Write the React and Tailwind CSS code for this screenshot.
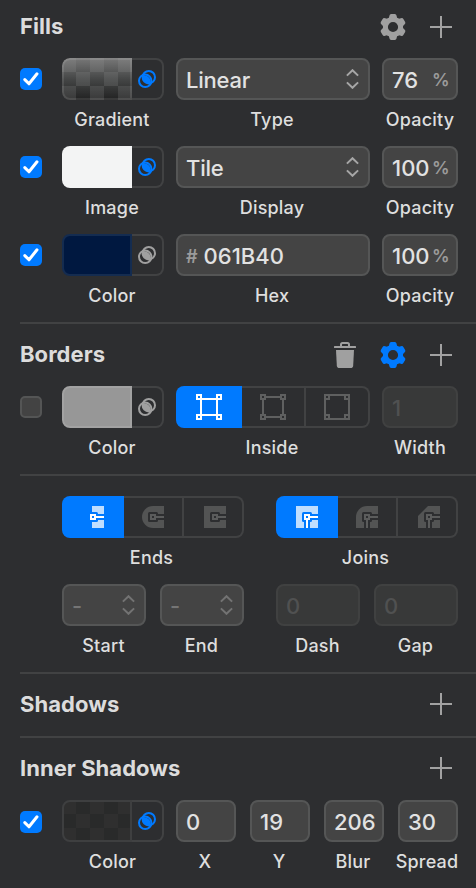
import React from "react";
import clsx from "clsx";

const PlusIcon = () => (
  <svg width="22" height="22" viewBox="0 0 22 22" className="fill-[#a2a2a2]">
    <rect x="0" y="10" width="22" height="2" />
    <rect x="10" y="0" width="2" height="22" />
  </svg>
);

const GearIcon = ({ active }) => (
  <svg width="26" height="26" viewBox="-13 -13 26 26" className={active ? "text-[#007aff]" : "text-[#a0a0a0]"}>
    <circle r="7.6" fill="none" stroke="currentColor" strokeWidth="5" />
    {[0, 60, 120, 180, 240, 300].map((a) => (
      <path
        key={a}
        transform={`rotate(${a})`}
        fill="currentColor"
        d="M-5.6 -8.2C-4 -8.8 -3.9 -9.6 -3.6 -11.2Q-3.3 -13 -1.8 -13H1.8Q3.3 -13 3.6 -11.2C3.9 -9.6 4 -8.8 5.6 -8.2L4 -6H-4Z"
      />
    ))}
  </svg>
);

const TrashIcon = () => (
  <svg width="22" height="26" viewBox="0 0 22 26" className="text-[#a0a0a0]">
    <path d="M7 5V2.5Q7 1 8.5 1H13.5Q15 1 15 2.5V5" fill="none" stroke="currentColor" strokeWidth="2" />
    <rect x="0" y="4" width="22" height="2" rx="0.5" fill="currentColor" />
    <path d="M2 8H20L19.2 23.4Q19 26 16.4 26H5.6Q3 26 2.8 23.4Z" fill="currentColor" />
  </svg>
);

const BlendIcon = ({ active }) => (
  <svg width="18" height="18" viewBox="0 0 18 18" className={active ? "text-[#007aff]" : "text-[#a0a0a0]"}>
    <circle cx="7.2" cy="10.8" r="6.2" fill="none" stroke="currentColor" strokeWidth="2" />
    <circle cx="10.8" cy="7.2" r="6.2" fill="none" stroke="currentColor" strokeWidth="2" />
    <path d="M4.8 5.6A6.2 6.2 0 0 1 12.4 13.2A6.2 6.2 0 0 1 4.8 5.6Z" fill="currentColor" />
  </svg>
);

const Chevrons = ({ dim }) => (
  <svg
    width="13"
    height="20"
    viewBox="0 0 13 20"
    className={clsx("shrink-0 fill-none stroke-2", dim ? "stroke-[#737373]" : "stroke-[#a6a6a6]")}
  >
    <path d="M0.9 6.6L6.5 1.2L12.1 6.6M0.9 13.4L6.5 18.8L12.1 13.4" />
  </svg>
);

/* Selection frame; inset moves the stroke from the handles' outer to inner edge. */
const FrameIcon = ({ inset, active }) => (
  <svg
    width="26"
    height="26"
    viewBox="0 0 26 26"
    className={clsx("fill-none stroke-2", active ? "stroke-white" : "stroke-[#5f6060]")}
  >
    {inset === 5 && <path d="M5 5H21V21H5Z" />}
    {inset === 3 && <path d="M6 3H20M23 6V20M20 23H6M3 20V6" />}
    {inset === 1 && <path d="M1 1H25V25H1Z" />}
    {[[1, 1], [21, 1], [1, 21], [21, 21]].map(([x, y]) => (
      <rect key={`${x}-${y}`} x={x} y={y} width="4" height="4" className={active ? "fill-[#007aff]" : "fill-[#2d2e30]"} />
    ))}
  </svg>
);

const SHAPES = {
  butt: "M10 0H22V22H10Z",
  round: "M11 0H22V22H11A11 11 0 0 1 11 0Z",
  square: "M0 0H22V22H0Z",
  roundJoin: "M11 0H22V22H0V11A11 11 0 0 1 11 0Z",
  bevelJoin: "M10 0H22V22H0V10Z",
};

const StrokeIcon = ({ shape, join, active }) => (
  <svg width="22" height="22" viewBox="0 0 22 22">
    <path d={SHAPES[shape]} className={active ? "fill-[#bfdeff]" : "fill-[#535454]"} />
    <g className={active ? "fill-[#007aff]" : "fill-[#2d2e30]"}>
      <rect x="6" y="6" width="10" height="10" rx="1.5" />
      <rect x="14" y="8" width="8" height="6" />
      {join && <rect x="8" y="14" width="6" height="8" />}
    </g>
    <g className={clsx("fill-none stroke-2", active ? "stroke-white" : "stroke-[#5b5c5c]")}>
      <rect x="9" y="9" width="4" height="4" />
      <path d="M14 11H22" />
      {join && <path d="M11 14V22" />}
    </g>
  </svg>
);

const Checkbox = ({ checked, className }) => (
  <div className={clsx("flex h-[42px] w-[22px] items-center", className)}>
    {checked ? (
      <div className="flex size-[22px] items-center justify-center rounded-[5px] bg-[#007aff]">
        <svg width="16" height="14" viewBox="0 0 16 14" className="fill-none stroke-white stroke-[3]">
          <path d="M1.8 7.6L6 11.8L14 1.8" strokeLinecap="round" strokeLinejoin="round" />
        </svg>
      </div>
    ) : (
      <div className="size-[22px] rounded-[5px] border-2 border-[#545555] bg-[#434343]" />
    )}
  </div>
);

const Labeled = ({ label, className, labelClass = "pr-[1px]", children }) => (
  <div className={clsx("flex h-[88px] shrink-0 flex-col", className)}>
    {children}
    <div className={clsx("flex h-[39px] items-center justify-center whitespace-nowrap text-[18px] font-medium tracking-[0.2px] text-[#dedede]", labelClass)}>
      {label}
    </div>
  </div>
);

const Swatch = ({ fill, active, children }) => (
  <div className="flex h-[42px] w-[102px]">
    <div className={clsx("w-[70px] overflow-hidden rounded-l-[8px]", fill)}>{children}</div>
    <div className="flex flex-1 items-center rounded-r-[8px] border-y-2 border-r-2 border-[#414243] pl-[6px]">
      <BlendIcon active={active} />
    </div>
  </div>
);

const Field = ({ value, unit, prefix, stepper, disabled, dim }) => (
  <div
    className={clsx(
      "flex h-[42px] items-center rounded-[8px] border-2 pl-[8px] pt-[2px] text-[22px] font-medium",
      disabled ? "border-[#404141] bg-[#383939] text-[#505151]" : "border-[#555656] bg-[#444444]",
      !disabled && (dim ? "text-[#757575]" : "text-[#e2e2e2]"),
      stepper ? "pr-[9px] tracking-[-0.2px]" : "pr-[8px]"
    )}
  >
    {prefix && <span className="mr-[6px] text-[18px] font-semibold text-[#9b9b9b]">{prefix}</span>}
    <span className="whitespace-nowrap">{value}</span>
    {unit && <span className="ml-auto w-[16px] text-[17.5px] font-semibold tracking-[-0.5px] text-[#9b9b9b]">{unit}</span>}
    {stepper && (
      <span className="-mt-[2px] ml-auto">
        <Chevrons dim={dim} />
      </span>
    )}
  </div>
);

const Segments = ({ icons, wide }) => (
  <div className="flex h-[42px]">
    <div className={clsx("flex items-center justify-center rounded-l-[8px] bg-[#007aff]", wide ? "w-[66px]" : "w-[62px]")}>
      {icons[0]}
    </div>
    <div className={clsx("flex items-center justify-center border-y-2 border-[#414243]", wide ? "w-[62px]" : "w-[58px]")}>
      {icons[1]}
    </div>
    <div className="flex flex-1">
      <div className="w-[2px] bg-[#414243]" />
      <div className={clsx("flex flex-1 items-center justify-center rounded-r-[8px] border-y-2 border-r-2 border-[#414243]", !wide && "pl-[4px]")}>
        {icons[2]}
      </div>
    </div>
  </div>
);

const Header = ({ title, className = "h-[62px] pb-[2px]", titleClass, children }) => (
  <div className={clsx("flex items-center pl-5 pr-6", className)}>
    <h2 className={clsx("text-[22px] font-bold tracking-[0.05px] text-[#dcdcdc]", titleClass)}>{title}</h2>
    <div className="ml-auto flex items-center gap-6">
      {children}
      <PlusIcon />
    </div>
  </div>
);

const Divider = () => <div className="ml-5 h-[2px] bg-[#414243]" />;

const FillRow = ({ swatch, swatchLabel, checked = true, field, fieldLabel, side, sideLabel }) => (
  <div className="flex pl-5">
    <Checkbox checked={checked} />
    <Labeled label={swatchLabel} className="ml-5 w-[102px]" labelClass="pr-[2px]">{swatch}</Labeled>
    <Labeled label={fieldLabel} className="ml-3 w-[194px]" labelClass="pr-[2px]">{field}</Labeled>
    <Labeled label={sideLabel} className="ml-3 w-[76px]" labelClass="tracking-[0.1px]">{side}</Labeled>
  </div>
);

export default function App() {
  return (
    <div className="h-[888px] w-[476px] overflow-hidden bg-[#2d2e30] font-['Inter','Liberation_Sans',sans-serif]">
      <section>
        <Header title="Fills" className="h-[58px] pb-[4px]" titleClass="-mt-[1px]">
          <GearIcon />
        </Header>
        <FillRow
          swatch={
            <Swatch
              active
              fill="bg-[conic-gradient(#232323_25%,#424242_0_50%,#232323_0_75%,#424242_0)] bg-[length:28px_28px]"
            >
              <div className="h-full rounded-l-[8px] border-2 border-white/10 bg-[linear-gradient(#8e8e8ecc,#676a6a80_50%,#1f202140)] bg-origin-border" />
            </Swatch>
          }
          swatchLabel="Gradient"
          field={<Field value="Linear" stepper />}
          fieldLabel="Type"
          side={<Field value="76" unit="%" />}
          sideLabel="Opacity"
        />
        <FillRow
          swatch={<Swatch active fill="bg-[#f3f4f4]" />}
          swatchLabel="Image"
          field={<Field value="Tile" stepper />}
          fieldLabel="Display"
          side={<Field value="100" unit="%" />}
          sideLabel="Opacity"
        />
        <FillRow
          swatch={<Swatch fill="border-2 border-[#142c50] bg-[#001840]" />}
          swatchLabel="Color"
          field={<Field prefix="#" value="061B40" />}
          fieldLabel="Hex"
          side={<Field value="100" unit="%" />}
          sideLabel="Opacity"
        />
      </section>
      <Divider />
      <section>
        <Header title="Borders" className="h-[62px]" titleClass="-mt-[1px]">
          <TrashIcon />
          <GearIcon active />
        </Header>
        <FillRow
          checked={false}
          swatch={<Swatch fill="border-2 border-[#a2a2a2] bg-[#979797]" />}
          swatchLabel="Color"
          field={
            <Segments
              wide
              icons={[
                <FrameIcon key="in" inset={5} active />,
                <FrameIcon key="mid" inset={3} />,
                <FrameIcon key="out" inset={1} />,
              ]}
            />
          }
          fieldLabel="Inside"
          side={<Field value="1" disabled />}
          sideLabel="Width"
        />
      </section>
      <Divider />
      <section className="pl-[62px] pt-5">
        <div className="flex gap-8">
          <Labeled label="Ends" className="w-[182px]" labelClass="pr-[3px]">
            <Segments
              icons={[
                <StrokeIcon key="butt" shape="butt" active />,
                <StrokeIcon key="round" shape="round" />,
                <StrokeIcon key="square" shape="square" />,
              ]}
            />
          </Labeled>
          <Labeled label="Joins" className="w-[182px]" labelClass="pr-[3px]">
            <Segments
              icons={[
                <StrokeIcon key="miter" shape="square" join active />,
                <StrokeIcon key="round" shape="roundJoin" join />,
                <StrokeIcon key="bevel" shape="bevelJoin" join />,
              ]}
            />
          </Labeled>
        </div>
        <div className="flex gap-[14px]">
          <Labeled label="Start" className="w-[84px]">
            <Field value="-" stepper dim />
          </Labeled>
          <Labeled label="End" className="w-[84px]">
            <Field value="-" stepper dim />
          </Labeled>
          <Labeled label="Dash" className="ml-[18px] w-[84px]">
            <Field value="0" disabled />
          </Labeled>
          <Labeled label="Gap" className="w-[84px]">
            <Field value="0" disabled />
          </Labeled>
        </div>
      </section>
      <Divider />
      <Header title="Shadows" titleClass="mt-[1px]" />
      <Divider />
      <Header title="Inner Shadows" titleClass="mt-[1px]" />
      <div className="flex pl-5">
        <Checkbox checked className="pt-[2px]" />
        <Labeled label="Color" className="ml-5 w-[102px]">
          <Swatch
            active
            fill="border-2 border-[#3e3f40] bg-[conic-gradient(#292a2a_25%,#2f2f2f_0_50%,#292a2a_0_75%,#2f2f2f_0)] bg-origin-border bg-[length:28px_28px]"
          />
        </Labeled>
        <div className="ml-3 flex gap-[14px]">
          {[["0", "X"], ["19", "Y"], ["206", "Blur"], ["30", "Spread"]].map(([value, label]) => (
            <Labeled key={label} label={label} className="w-[60px]" labelClass="pr-[2px]">
              <Field value={value} />
            </Labeled>
          ))}
        </div>
      </div>
    </div>
  );
}
